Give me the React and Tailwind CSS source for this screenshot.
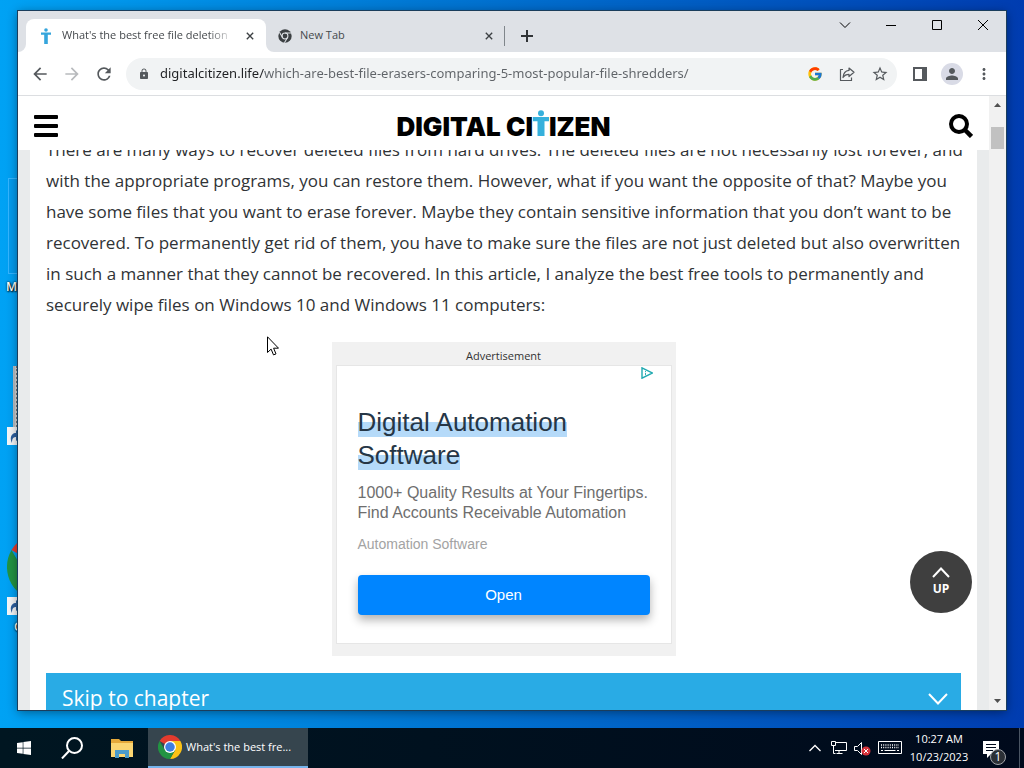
import React from "react";
import { FcGoogle } from "react-icons/fc";
import { FaWindows } from "react-icons/fa";
import { MdArrowBack, MdArrowForward, MdRefresh, MdLock, MdStarBorder, MdPerson, MdMoreVert } from "react-icons/md";

const URL_TEXT = "digitalcitizen.life/which-are-best-file-erasers-comparing-5-most-popular-file-shredders/";

const PARAGRAPH = [
  "There are many ways to recover deleted files from hard drives. The deleted files are not necessarily lost forever, and",
  "with the appropriate programs, you can restore them. However, what if you want the opposite of that? Maybe you",
  "have some files that you want to erase forever. Maybe they contain sensitive information that you don’t want to be",
  "recovered. To permanently get rid of them, you have to make sure the files are not just deleted but also overwritten",
  "in such a manner that they cannot be recovered. In this article, I analyze the best free tools to permanently and",
  "securely wipe files on Windows 10 and Windows 11 computers:",
];

function Cross({ className }) {
  return (
    <svg viewBox="0 0 10 10" className={className} fill="none" stroke="currentColor" strokeWidth="1.7">
      <path d="M1 1l8 8M9 1l-8 8" />
    </svg>
  );
}

function CitizenFigure({ className }) {
  return (
    <svg viewBox="0 0 16 26" className={className} fill="#35b0dc">
      <circle cx="8" cy="3.2" r="3" />
      <path d="M0 7h16v4.300h-4.500V26h-7V11.300H0z" />
    </svg>
  );
}

function Favicon({ className }) {
  return (
    <svg viewBox="0 0 16 16" className={className} fill="#35a5dc">
      <circle cx="8" cy="2" r="1.800" />
      <path d="M3 4.500h10v2.200H9.800V16H6.200V6.700H3z" />
    </svg>
  );
}

function ChromeLogo({ className }) {
  return (
    <svg viewBox="0 0 48 48" className={className}>
      <path fill="#e33b2e" d="M24 24L3.200 12A24 24 0 0 1 44.800 12z" />
      <path fill="#fbc116" d="M24 12h20.800A24 24 0 0 1 24 48l10.400-18z" />
      <path fill="#229342" d="M3.200 12A24 24 0 0 0 24 48l10.400-18L24 24l-10.400 6z" />
      <circle cx="24" cy="24" r="12" fill="#fff" />
      <circle cx="24" cy="24" r="9.500" fill="#3f7de0" />
    </svg>
  );
}

function ChromeMono({ className }) {
  return (
    <svg viewBox="0 0 24 24" className={className}>
      <circle cx="12" cy="12" r="11.500" fill="#3c4043" />
      <circle cx="12" cy="12" r="5" fill="none" stroke="#dee1e6" strokeWidth="1.800" />
      <path d="M12 7h10.500M7.670 14.500L2.500 5.500M16.330 14.500L11 23.500" stroke="#dee1e6" strokeWidth="1.800" />
    </svg>
  );
}

function TabStrip() {
  return (
    <div className="flex h-[41px] shrink-0 items-end bg-[#dee1e6] pl-2">
      <div className="relative flex h-[33px] w-60 items-center rounded-t-lg bg-white pr-3 pl-3">
        <svg viewBox="0 0 8 8" className="absolute bottom-0 -left-2 h-2 w-2" fill="#fff">
          <path d="M8 0v8H0a8 8 0 0 0 8-8z" />
        </svg>
        <svg viewBox="0 0 8 8" className="absolute -right-2 bottom-0 h-2 w-2" fill="#fff">
          <path d="M0 0v8h8a8 8 0 0 1-8-8z" />
        </svg>
        <Favicon className="mr-2 h-4 w-4 shrink-0" />
        <span className="flex-1 overflow-hidden text-[11px] whitespace-nowrap text-[#45494d] mask-r-from-85%">
          What's the best free file deletion
        </span>
        <button aria-label="Close tab" className="ml-3 text-[#3c4043]">
          <Cross className="h-2 w-2" />
        </button>
      </div>
      <div className="flex h-[33px] w-[238px] items-center pr-[11px] pl-3">
        <ChromeMono className="mr-2 h-[14px] w-[14px] shrink-0" />
        <span className="flex-1 text-[11px] text-[#45494d]">New Tab</span>
        <button aria-label="Close New Tab" className="text-[#3c4043]">
          <Cross className="h-2 w-2" />
        </button>
      </div>
      <div className="mb-[6px] h-5 w-px bg-[#80868b]" />
      <button aria-label="New tab" className="mb-[10px] ml-4 text-[#303336]">
        <svg viewBox="0 0 12 12" className="h-3 w-3" stroke="currentColor" strokeWidth="2">
          <path d="M6 0v12M0 6h12" />
        </svg>
      </button>
      <div className="flex flex-1 items-center justify-end gap-[34px] self-start pt-2 pr-[17px] text-black">
        <button aria-label="Search tabs">
          <svg viewBox="0 0 12 12" className="h-3 w-3" fill="none" stroke="currentColor">
            <path d="M1 3.500l5 5 5-5" />
          </svg>
        </button>
        <button aria-label="Minimize">
          <svg viewBox="0 0 12 12" className="h-3 w-3" fill="none" stroke="currentColor">
            <path d="M1 6.500h10" />
          </svg>
        </button>
        <button aria-label="Maximize">
          <svg viewBox="0 0 12 12" className="h-3 w-3" fill="none" stroke="currentColor">
            <path d="M1.500 1.500h9v9h-9z" />
          </svg>
        </button>
        <button aria-label="Close">
          <svg viewBox="0 0 12 12" className="h-3 w-3" fill="none" stroke="currentColor">
            <path d="M1 1l10 10M11 1L1 11" />
          </svg>
        </button>
      </div>
    </div>
  );
}

function Toolbar() {
  return (
    <div className="flex h-11 shrink-0 items-center border-b border-[#dcdee1] bg-white pr-[13px] pl-3 text-[#55595d]">
      <button aria-label="Back" className="mr-3">
        <MdArrowBack className="h-5 w-5" />
      </button>
      <button aria-label="Forward" className="mr-3 text-[#b8babd]">
        <MdArrowForward className="h-5 w-5" />
      </button>
      <button aria-label="Reload" className="mr-3">
        <MdRefresh className="h-5 w-5" />
      </button>
      <div className="flex h-8 flex-1 items-center rounded-full bg-[#f1f3f4] pr-2 pl-3">
        <MdLock className="mr-[10px] h-3 w-3 shrink-0" />
        <input
          aria-label="Address"
          defaultValue={URL_TEXT}
          className="min-w-0 flex-1 bg-linear-to-r from-[#202124] from-[104px] to-[#5f6368] to-[104px] bg-clip-text pt-px font-['Noto_Sans',sans-serif] text-[13px] text-transparent outline-none"
        />
        <div className="flex items-center gap-4">
          <button aria-label="Search with Google">
            <FcGoogle className="h-4 w-4" />
          </button>
          <button aria-label="Share">
            <svg viewBox="0 0 16 16" className="h-4 w-4" fill="none" stroke="currentColor" strokeWidth="1.200" strokeLinejoin="round">
              <path d="M4 3.500H1.500v11h11v-3" />
              <path d="M10 2l5 4.300-5 4.200V8.300C7 8.300 5.200 9.500 4 11.500 4.300 7.500 6.500 4.800 10 4.400z" />
            </svg>
          </button>
          <button aria-label="Bookmark this tab">
            <MdStarBorder className="h-[18px] w-[18px]" />
          </button>
        </div>
      </div>
      <button aria-label="Side panel" className="ml-4">
        <svg viewBox="0 0 14 14" className="h-[14px] w-[14px]">
          <path fill="currentColor" d="M0 0h14v14H0zM2 2v10h7V2z" fillRule="evenodd" />
        </svg>
      </button>
      <button aria-label="Profile" className="ml-[14px] flex h-[22px] w-[22px] items-center justify-center rounded-full bg-[#d9dbe6]">
        <MdPerson className="h-[18px] w-[18px]" />
      </button>
      <button aria-label="Menu" className="ml-3">
        <MdMoreVert className="h-[18px] w-[18px]" />
      </button>
    </div>
  );
}

function SiteHeader() {
  return (
    <header className="relative z-10 flex h-[54px] shrink-0 items-center justify-between bg-white pt-[6px] pr-4 pl-4 text-black">
      <button aria-label="Open menu">
        <svg viewBox="0 0 24 22" className="h-[22px] w-6" fill="currentColor">
          <rect width="24" height="4" rx="1" />
          <rect y="9" width="24" height="4" rx="1" />
          <rect y="18" width="24" height="4" rx="1" />
        </svg>
      </button>
      <a href="#home" aria-label="Digital Citizen" className="mb-1 flex items-end font-[Inter,sans-serif] text-[26px] leading-6 font-black">
        <span>DIGITAL CI</span>
        <CitizenFigure className="mb-[3px] h-[26px] w-4" />
        <span>IZEN</span>
      </a>
      <button aria-label="Search">
        <svg viewBox="0 0 24 24" className="h-6 w-6" fill="none" stroke="currentColor">
          <circle cx="10" cy="10" r="8" strokeWidth="4" />
          <path d="M15.500 15.500l7 7" strokeWidth="4.500" />
        </svg>
      </button>
    </header>
  );
}

function Advertisement() {
  return (
    <aside className="mx-auto mt-[21px] w-[344px] bg-[#f1f1f1] px-1 pt-[5px] pb-3">
      <p className="text-center text-[11px] leading-[18px] text-[#333]">Advertisement</p>
      <div className="relative h-[279px] border border-[#e6e6e6] bg-white px-[21px] pt-10 font-['Liberation_Sans',sans-serif]">
        <svg viewBox="0 0 12 12" className="absolute top-px right-[18px] h-3 w-3" fill="none" stroke="#1fa9b0" strokeWidth="1.400">
          <path d="M1 .8l10.200 5.200L1 11.200z" />
          <path strokeWidth=".9" d="M4.500 4v1M4.500 5.800v2.400" />
        </svg>
        <h2 className="text-[26px] leading-[33px] text-[#263646]">
          <span className="bg-linear-to-b from-transparent from-50% to-[#b5daf9] to-50%">Digital Automation</span>
          <br />
          <span className="bg-linear-to-b from-transparent from-50% to-[#b5daf9] to-50%">Software</span>
        </h2>
        <p className="mt-[11px] text-base leading-5 whitespace-nowrap text-[#6e6e6e]">
          1000+ Quality Results at Your Fingertips.
          <br />
          Find Accounts Receivable Automation
        </p>
        <p className="mt-[11px] text-sm leading-5 text-[#a3a3a3]">Automation Software</p>
        <button className="mt-[21px] block h-10 w-full rounded-sm bg-[#0085ff] text-[15px] text-white shadow-[0_5px_10px_rgba(0,0,0,0.300)]">
          Open
        </button>
      </div>
    </aside>
  );
}

function Page() {
  return (
    <div className="flex min-h-0 flex-1 bg-white">
      <div className="relative flex min-w-0 flex-1 flex-col overflow-hidden bg-[#e9ebec]">
        <SiteHeader />
        <main className="mx-3 flex min-h-0 flex-1 flex-col bg-white px-4">
          <p className="-mt-4 shrink-0 pb-px text-[17px] leading-[31px] whitespace-nowrap text-[#303336]">
            {PARAGRAPH.map((line) => (
              <span key={line} className="block">
                {line}
              </span>
            ))}
          </p>
          <Advertisement />
          <button className="mt-[17px] flex h-[52px] shrink-0 items-center justify-between bg-[#29abe5] pr-[13px] pl-4 text-[21px] text-white">
            Skip to chapter
            <svg viewBox="0 0 20 12" className="h-3 w-5" fill="none" stroke="currentColor" strokeWidth="2">
              <path d="M1 1l9 9.500L19 1" />
            </svg>
          </button>
        </main>
        <button className="absolute right-[17px] bottom-[97px] z-10 flex h-[62px] w-[62px] flex-col items-center justify-center rounded-full bg-[#3f3f3f] text-xs font-bold text-white">
          <svg viewBox="0 0 18 11" className="mb-[3px] h-[11px] w-[18px]" fill="none" stroke="currentColor" strokeWidth="2">
            <path d="M1 10l8-8.500L17 10" />
          </svg>
          UP
        </button>
      </div>
      <div className="flex w-[17px] shrink-0 flex-col items-center bg-[#f1f1f1] py-[7px]">
        <svg viewBox="0 0 7 4" className="h-1 w-[7px]" fill="#505050">
          <path d="M3.500 0L7 4H0z" />
        </svg>
        <div className="mt-5 h-[22px] w-[13px] bg-[#c1c1c1]" />
        <svg viewBox="0 0 7 4" className="mt-auto h-1 w-[7px]" fill="#505050">
          <path d="M0 0h7L3.500 4z" />
        </svg>
      </div>
    </div>
  );
}

function ShortcutArrow({ className }) {
  return (
    <svg viewBox="0 0 18 18" className={className}>
      <path fill="#f4f6f8" d="M0 0h18v18H0z" />
      <path fill="#2c5f9e" d="M5 16C2 10 5 6 9 6V3l7 6-7 5v-4c-3 0-4 2-4 6z" />
    </svg>
  );
}

function DesktopIcons() {
  return (
    <div className="absolute inset-y-0 left-0 w-[18px] overflow-hidden text-xs text-white">
      <div className="absolute top-[178px] left-2 h-24 w-24 border border-[#35b5ff] bg-[#0a94e4]/40" />
      <span className="absolute top-[279px] left-[6px] font-semibold [text-shadow:1px_1px_2px_#000,0_0_2px_#000]">M</span>
      <div className="absolute top-[366px] left-[13px] h-16 w-8 border-l-2 border-[#b8bec4] bg-[#d8d8d8]">
        <div className="ml-[1px] h-full border-l-2 border-dotted border-[#777]" />
      </div>
      <ShortcutArrow className="absolute top-[427px] left-[7px] h-[18px] w-[18px]" />
      <ChromeLogo className="absolute top-[533px] left-[7px] h-[68px] w-[68px]" />
      <ShortcutArrow className="absolute top-[597px] left-[7px] h-[18px] w-[18px]" />
      <span className="absolute top-[619px] left-[14px] font-semibold [text-shadow:1px_1px_2px_#000,0_0_2px_#000]">G</span>
    </div>
  );
}

function Taskbar() {
  return (
    <footer className="relative flex h-10 shrink-0 items-center bg-linear-to-r from-[#001621] to-[#000a1c] text-white">
      <button aria-label="Start" className="flex w-12 justify-center">
        <FaWindows className="h-4 w-4" />
      </button>
      <button aria-label="Search" className="flex w-12 justify-center">
        <svg viewBox="0 0 22 22" className="h-[22px] w-[22px]" fill="none" stroke="currentColor" strokeWidth="2">
          <circle cx="13.500" cy="8.500" r="7.500" />
          <path d="M8 14l-7 7.500" />
        </svg>
      </button>
      <button aria-label="File Explorer" className="flex w-[52px] justify-center">
        <svg viewBox="0 0 22 19" className="h-[19px] w-[22px]">
          <path fill="#e5a93a" d="M0 0h8l2 2h12v5H0z" />
          <path fill="#fbd672" d="M0 4h22v14H0z" />
          <path fill="#4b9ccb" d="M4 11h14v8h-4v-4H8v4H4z" />
        </svg>
      </button>
      <button className="flex h-10 w-40 items-center gap-1 border-b-2 border-[#76b4ec] bg-[#36454e] pl-[10px] text-[11px]">
        <ChromeLogo className="h-6 w-6 shrink-0" />
        <span className="whitespace-nowrap">What's the best fre...</span>
      </button>
      <div className="flex flex-1 items-center justify-end pr-6">
        <button aria-label="Show hidden icons" className="mr-[10px]">
          <svg viewBox="0 0 12 8" className="h-2 w-3" fill="none" stroke="currentColor" strokeWidth="1.300">
            <path d="M.5 7L6 1.500 11.500 7" />
          </svg>
        </button>
        <button aria-label="Network" className="mr-[7px]">
          <svg viewBox="0 0 16 14" className="h-[14px] w-4" fill="none" stroke="currentColor">
            <path d="M5 1.500h10.500v8H4M.5.500h4v4h-4zM2.500 4.500v8h2M8 9.500v3M5.500 12.500h6" />
          </svg>
        </button>
        <button aria-label="Volume muted" className="mr-[7px]">
          <svg viewBox="0 0 17 15" className="h-[15px] w-[17px]" fill="none" stroke="currentColor">
            <path d="M.5 5.500h3l4-4v12l-4-4h-3z" />
            <circle cx="12" cy="10" r="4.500" fill="#d6323b" stroke="none" />
            <path d="M10 8l4 4M14 8l-4 4" />
          </svg>
        </button>
        <button aria-label="Touch keyboard" className="mr-2">
          <svg viewBox="0 0 24 14" className="h-[14px] w-6" fill="none" stroke="currentColor">
            <path d="M.5.500h23v12H.5z" />
            <path strokeDasharray="1 1.200" strokeWidth="1.300" d="M3 4h18M3 6.500h18" />
            <path d="M3 9.500h2M6.500 9.500h11M19 9.500h2" />
          </svg>
        </button>
        <button className="mr-[14px] flex w-[58px] flex-col items-center text-[11px] leading-[18px] whitespace-nowrap">
          <span>10:27 AM</span>
          <span>10/23/2023</span>
        </button>
        <button aria-label="Notifications, 1 new" className="relative mt-[3px]">
          <svg viewBox="0 0 18 17" className="h-[17px] w-[18px]">
            <path fill="#fff" d="M1 0h16v13H9l-4 4v-4H1z" />
            <path stroke="#000a1c" d="M4 3.500h10M4 6.500h10M4 9.500h7" />
          </svg>
          <span className="absolute top-2 left-2 flex h-4 w-4 items-center justify-center rounded-full border border-[#a0a4a8] bg-[#2b3036] text-xs leading-none">
            1
          </span>
        </button>
      </div>
      <div className="absolute right-1 h-10 w-px bg-[#4a5563]" />
    </footer>
  );
}

export default function App() {
  return (
    <div className="relative flex h-screen flex-col overflow-hidden bg-linear-to-r from-[#00a2f4] via-[#0078d4] via-40% to-[#003cb0] font-['Open_Sans','Noto_Sans',sans-serif]">
      <DesktopIcons />
      <div className="flex min-h-0 flex-1 px-[18px] pt-[11px] pb-[18px]">
        <section className="relative flex min-w-0 flex-1 flex-col overflow-hidden bg-white shadow-[0_2px_10px_rgba(0,0,0,0.450)] outline outline-[#1a3d5c]">
          <TabStrip />
          <Toolbar />
          <Page />
        </section>
      </div>
      <Taskbar />
      <svg viewBox="0 0 12 20" className="absolute top-[336px] left-[267px] h-5 w-3" fill="#fff" stroke="#000" strokeLinejoin="round">
        <path d="M.5.800v15.700l3.600-3.400 2.400 5.800 2.500-1-2.400-5.700h4.900z" />
      </svg>
    </div>
  );
}
